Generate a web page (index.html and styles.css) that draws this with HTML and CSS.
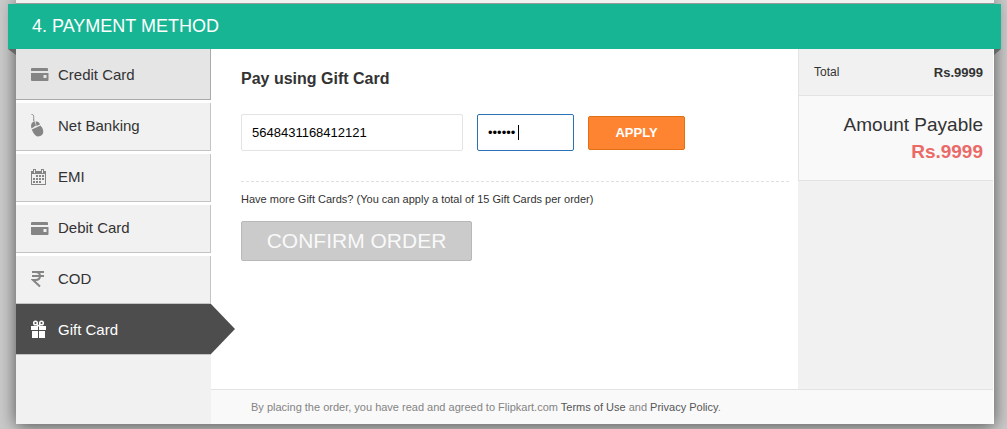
FILE: index.html
```
<!DOCTYPE html>
<html lang="en">
<head>
  <meta charset="UTF-8" />
  <meta name="viewport" content="width=device-width, initial-scale=1.0"/>
  <title>Payment Method</title>
  <link rel="stylesheet" href="styles.css">
</head>
<body>

  <main class="checkout">
    <div class="previous"></div>
    <h1 class="banner">4. PAYMENT METHOD</h1>

    <div class="columns">
      <!-- Payment types -->
      <nav class="methods">
        <a class="method first" href="#credit">
          <svg class="icon" viewBox="0 0 18 24"><path d="M0 7q0-1 1-1h15q1 0 1 1v2H0z"/><path fill-rule="evenodd" d="M0 11h17.500v7q0 1-1 1H1q-1 0-1-1zM12.500 13v3h3v-3z"/></svg>
          Credit Card
        </a>
        <a class="method" href="#netbanking">
          <svg class="icon" viewBox="0 0 18 24"><path class="line" d="M.5 .5c3.500 0 1.500 3 2.500 7"/><path d="M0 12.500Q0 8 3.500 7.500L5 11.500 .5 14.500zM4.500 7.500q3.500-.5 4.500 3L5.500 12zM.8 15.500L9.500 11.500q3.500 4 2.500 8-1.500 3-5.500 3-3.500-1-5.700-7z"/></svg>
          Net Banking
        </a>
        <a class="method" href="#emi">
          <svg class="icon" viewBox="0 0 18 24"><path fill-rule="evenodd" d="M0 6h2V4h3v2h5V4h3v2h2v14H0zM1 9v10h13V9zM3 5v3h1V5zM11 5v3h1V5z"/><path d="M5 10h2v2H5zM8 10h2v2H8zM11 10h2v2h-2zM2 13h2v2H2zM5 13h2v2H5zM8 13h2v2H8zM11 13h2v2h-2zM2 16h2v2H2zM5 16h2v2H5zM8 16h2v2H8z"/></svg>
          EMI
        </a>
        <a class="method" href="#debit">
          <svg class="icon" viewBox="0 0 18 24"><path d="M0 7q0-1 1-1h15q1 0 1 1v2H0z"/><path fill-rule="evenodd" d="M0 11h17.500v7q0 1-1 1H1q-1 0-1-1zM12.500 13v3h3v-3z"/></svg>
          Debit Card
        </a>
        <a class="method" href="#cod">
          <svg class="icon" viewBox="0 0 18 24"><path class="rupee" d="M1 5h12M1 9h12M1 5h3.500q4.500 0 4.500 4t-4.500 4H2l7 6.500"/></svg>
          COD
        </a>
        <a class="method active" href="#giftcard">
          <svg class="icon" viewBox="0 0 18 24"><path d="M0 9h7v4H0zM8 9h7v4H8zM1 14h6v7H1zM8 14h6v7H8z"/><path class="line" d="M7.500 9L6 7.500M7.500 9L9 7.500"/><circle class="line" cx="4.500" cy="6" r="1.800"/><circle class="line" cx="10.500" cy="6" r="1.800"/></svg>
          Gift Card
        </a>
      </nav>

      <div class="content">
        <div class="top">
          <section class="pay">
            <h2>Pay using Gift Card</h2>
            <form>
              <div class="fields">
                <input class="field number" type="text" value="5648431168412121" aria-label="Gift card number">
                <div class="pin-box">
                  <input class="field pin" type="password" value="123456" aria-label="PIN">
                </div>
                <button class="apply" type="button">APPLY</button>
              </div>
              <p class="more">Have more Gift Cards? (You can apply a total of 15 Gift Cards per order)</p>
              <button class="confirm" type="submit" disabled>CONFIRM ORDER</button>
            </form>
          </section>

          <!-- Order summary -->
          <aside class="summary">
            <div class="total"><span>Total</span><b>Rs.9999</b></div>
            <div class="payable">
              <div>Amount Payable</div>
              <b>Rs.9999</b>
            </div>
          </aside>
        </div>

        <footer class="terms">By placing the order, you have read and agreed to Flipkart.com <a href="#terms">Terms of Use</a> and <a href="#privacy">Privacy Policy</a>.</footer>
      </div>
    </div>
  </main>

</body>
</html>
```
FILE: styles.css
```
* { margin: 0; padding: 0; box-sizing: border-box; }
body {
  background: #cacaca;
  font-family: "Liberation Sans", Arial, sans-serif;
  font-size: 12px;
  color: #333;
  padding: 0 13px 5px 16px;
}
a { text-decoration: none; color: inherit; }

.checkout {
  background: #f1f1f1;
  box-shadow: 0 2px 16px rgba(0,0,0,0.6);
}
/* bottom edge of the step above */
.previous { height: 4px; border-bottom: 1px solid #999; }

/* ribbon */
.banner {
  position: relative;
  margin: 0 -7px 0 -8px;
  height: 45px;
  padding: 0 24px;
  line-height: 45px;
  background: #18b595;
  color: #fff;
  font-size: 18px;
  font-weight: normal;
}
.banner::before, .banner::after {
  content: "";
  position: absolute;
  top: 100%;
  border-top: 6px solid #666;
}
.banner::before { left: 0; border-left: 8px solid transparent; }
.banner::after { right: 0; border-right: 7px solid transparent; }

.columns { display: flex; min-height: 375px; }

.methods { width: 195px; flex: none; }
.method {
  display: flex;
  align-items: center;
  gap: 9px;
  height: 51px;
  padding: 0 0 2px 15px;
  background: #f1f1f1;
  border-top: 3px solid #fff;
  border-bottom: 1px solid #c4c4c4;
  box-shadow: inset -1px 0 #c4c4c4;
  font-size: 15px;
}
.method.first {
  padding-bottom: 0;
  background: #e5e5e5;
  border-top: 0;
  border-bottom-color: #aaa;
  box-shadow: inset -1px 0 #aaa;
}
.method.active {
  position: relative;
  padding-bottom: 0;
  background: #4d4d4d;
  border-top: 0;
  box-shadow: none;
  color: #fff;
}
.method.active::after {
  content: "";
  position: absolute;
  left: 100%;
  top: 0;
  border: 25px solid transparent;
  border-left: 24px solid #4d4d4d;
  border-right: 0;
}
.icon { width: 18px; height: 24px; fill: #858585; stroke: none; }
.icon .line { fill: none; stroke: #858585; stroke-width: 1; }
.icon .rupee { fill: none; stroke: #858585; stroke-width: 2; }
.active .icon { fill: #fff; }
.active .icon .line { stroke: #fff; stroke-width: 1.5; }

.content { flex: 1; display: flex; flex-direction: column; padding-right: 1px; background: #fff; }
.top { flex: 1; display: flex; }

.pay { flex: 1; padding: 20px 9px 0 30px; }
.pay h2 { font-size: 16px; line-height: 20px; margin-bottom: 25px; }
.fields {
  display: flex;
  align-items: center;
  gap: 14px;
  padding-bottom: 30px;
  border-bottom: 1px dashed #e0e0e0;
}
.field {
  display: block;
  height: 37px;
  padding: 0 10px;
  border: 1px solid #e3e3e3;
  border-radius: 2px;
  outline: none;
  background: #fff;
  color: #000;
  font: 13px "Liberation Sans", Arial, sans-serif;
}
.number { width: 222px; }
.pin { width: 97px; border-color: #2a72b5; }
.pin-box { position: relative; }
/* text cursor */
.pin-box::after {
  content: "";
  position: absolute;
  left: 41px;
  top: 11px;
  width: 1px;
  height: 15px;
  background: #000;
}
.apply {
  width: 97px;
  height: 34px;
  background: #ff8432;
  border: 1px solid #e27012;
  border-radius: 2px;
  color: #fff;
  font: bold 13px "Liberation Sans", Arial, sans-serif;
}
.more { font-size: 11px; line-height: 14px; margin: 10px 0 15px; }
.confirm {
  width: 231px;
  height: 40px;
  background: #cbcbcb;
  border: 1px solid #b8b8b8;
  border-radius: 2px;
  color: #f9f9f9;
  font: 21px "Liberation Sans", Arial, sans-serif;
}

.summary { width: 195px; flex: none; background: #f1f1f1; }
.total, .payable { border-left: 1px solid #e3e3e3; border-bottom: 1px solid #e3e3e3; }
.total {
  display: flex;
  justify-content: space-between;
  align-items: center;
  height: 47px;
  padding: 0 10px 0 15px;
}
.total b { font-size: 13px; }
.payable {
  height: 85px;
  padding: 15px 10px 0 0;
  background: #f9f9f9;
  text-align: right;
  font-size: 19px;
  line-height: 27px;
}
.payable b { color: #ea6a68; }

.terms {
  height: 35px;
  padding-left: 40px;
  background: #f9f9f9;
  border-top: 1px solid #e3e3e3;
  color: #848484;
  font-size: 11px;
  line-height: 34px;
}
.terms a { color: #565656; }
```
